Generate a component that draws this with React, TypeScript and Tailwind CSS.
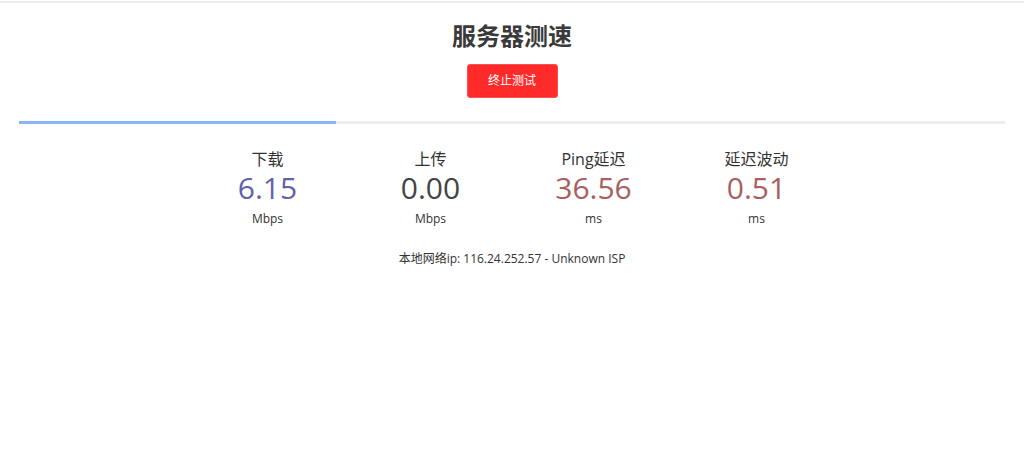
const stats = [
  { label: '下载', value: '6.15', unit: 'Mbps', color: 'text-[#6262aa]' },
  { label: '上传', value: '0.00', unit: 'Mbps', color: 'text-[#444444]' },
  { label: 'Ping延迟', value: '36.56', unit: 'ms', color: 'text-[#aa5e5e]' },
  { label: '延迟波动', value: '0.51', unit: 'ms', color: 'text-[#aa5e5e]' },
];

export default function App() {
  return (
    <div className="w-[1024px] h-[470px] bg-white text-[#333] font-['Open_Sans','Noto_Sans_CJK_SC',sans-serif] pt-px">
      <div className="h-[2px] bg-[#ececec]" />

      <h1 className="mt-[18px] text-center text-[24px] leading-[30px] font-bold text-[#3a3a3a]">服务器测速</h1>

      <div className="flex justify-center mt-[13px]">
        <button className="w-[91px] h-[34px] rounded-[3px] bg-[#ff2a2a] border border-[#ff5050] text-white text-[12px]">
          终止测试
        </button>
      </div>

      {/* 进度条 */}
      <div className="mx-[19px] mt-[23px] h-[3px] bg-[#eeeeee]">
        <div className="h-full w-[32.2%] bg-[#8ab4f8]" />
      </div>

      <div className="flex justify-center mt-[25px]">
        {stats.map((s) => (
          <div key={s.label} className="w-[163px] flex flex-col items-center">
            <div className="text-[16px] leading-[20px] text-[#333]">{s.label}</div>
            <div className={`mt-[1px] text-[30px] leading-[36px] ${s.color}`}>{s.value}</div>
            <div className="mt-[5px] text-[12px] leading-[16px] text-[#333]">{s.unit}</div>
          </div>
        ))}
      </div>

      <div className="mt-[24px] text-center text-[12px] leading-[16px] text-[#333]">
        本地网络ip: 116.24.252.57 - Unknown ISP
      </div>
    </div>
  );
}
